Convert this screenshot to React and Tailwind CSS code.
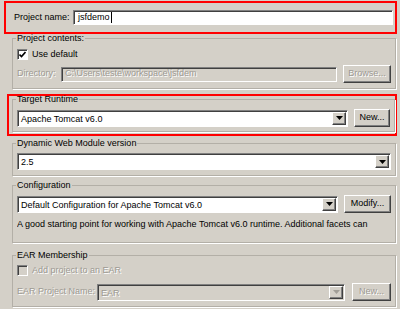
import clsx from "clsx";

const sunken =
  "border border-t-[#808080] border-l-[#808080] border-b-white border-r-white shadow-[inset_1px_1px_0_#404040]";
const raised =
  "border border-t-white border-l-white border-r-[#404040] border-b-[#404040] shadow-[inset_-1px_-1px_0_#808080]";
const dim = "text-[#9d9a93] [text-shadow:1px_1px_0_#fff]";

function Group({ label, className, children }) {
  return (
    <fieldset
      className={clsx(
        "border border-[#b3afa7] px-[4px] shadow-[1px_1px_0_#fff]",
        className
      )}
    >
      <legend className="-ml-[1px] px-[1px] leading-[7px]">{label}</legend>
      {children}
    </fieldset>
  );
}

function Button({ children, disabled, className }) {
  return (
    <div
      className={clsx(
        "flex h-[18px] shrink-0 items-center justify-center bg-[#d4d0c8]",
        raised,
        disabled ? dim : "text-black",
        className
      )}
    >
      {children}
    </div>
  );
}

function Arrow({ disabled }) {
  return (
    <div
      className={clsx(
        "my-[1px] mr-[1px] flex w-[14px] items-center justify-center bg-[#d4d0c8]",
        raised
      )}
    >
      <svg width="7" height="4" viewBox="0 0 7 4">
        <path d="M0 0h7L3.5 4z" fill={disabled ? "#a19e97" : "#000"} />
      </svg>
    </div>
  );
}

function Combo({ value, disabled, className }) {
  return (
    <div
      className={clsx(
        "flex h-[17px] items-stretch",
        sunken,
        disabled ? "bg-[#d4d0c8]" : "bg-white",
        className
      )}
    >
      <span
        className={clsx(
          "flex-1 overflow-hidden whitespace-nowrap pl-[3px] pt-[1px] leading-[14px]",
          disabled && dim
        )}
      >
        {value}
      </span>
      <Arrow disabled={disabled} />
    </div>
  );
}

function Checkbox({ checked, disabled }) {
  return (
    <div
      className={clsx(
        "flex h-[11px] w-[11px] shrink-0 items-center justify-center",
        sunken,
        disabled ? "bg-[#d4d0c8]" : "bg-white"
      )}
    >
      {checked && (
        <svg width="7" height="7" viewBox="0 0 7 7">
          <path d="M0.5 3.5 L2.5 5.5 L6.5 1" stroke="#000" strokeWidth="1.6" fill="none" />
        </svg>
      )}
    </div>
  );
}

export default function App() {
  return (
    <div className="h-[309px] w-[400px] overflow-hidden bg-[#d4d0c8] pt-[1px] font-['Liberation_Sans',Arial,sans-serif] text-[9px] text-black">
      <div className="ml-[4px] flex h-[33px] w-[393px] items-center border-2 border-[#f00] pl-[8px]">
        <span className="w-[59px] shrink-0">Project name:</span>
        <div className={clsx("flex h-[15px] w-[320px] items-center bg-white pl-[4px]", sunken)}>
          <span>jsfdemo</span>
          <span className="ml-[1px] h-[11px] w-px bg-black" />
        </div>
      </div>

      <Group label="Project contents:" className="ml-[12px] mt-[1px] w-[384px] pt-[7px] pb-[5px]">
        <div className="flex h-[11px] items-center gap-[4px]">
          <Checkbox checked />
          <span>Use default</span>
        </div>
        <div className="mt-[5px] flex h-[18px] items-center">
          <span className={clsx("w-[44px] shrink-0", dim)}>Directory:</span>
          <div
            className={clsx(
              "flex h-[15px] flex-1 items-center overflow-hidden whitespace-nowrap bg-[#d4d0c8] pl-[3px]",
              sunken,
              dim
            )}
          >
            C:\Users\teste\workspace\jsfdem
          </div>
          <Button disabled className="ml-[6px] w-[48px]">
            Browse...
          </Button>
        </div>
      </Group>

      <div className="ml-[7px] mt-[5px] h-[42px] w-[390px] border-2 border-[#f00] pl-[3px]">
        <Group label="Target Runtime" className="w-[383px] pt-[6px] pb-[4px]">
          <div className="flex h-[18px] items-center">
            <Combo value="Apache Tomcat v6.0" className="flex-1" />
            <Button className="ml-[6px] w-[36px]">New...</Button>
          </div>
        </Group>
      </div>

      <Group label="Dynamic Web Module version" className="ml-[12px] mt-[4px] w-[384px] pt-[6px] pb-[5px]">
        <Combo value="2.5" />
      </Group>

      <Group label="Configuration" className="ml-[12px] mt-[6px] w-[384px] pt-[6px] pb-[12px]">
        <div className="flex h-[18px] items-center">
          <Combo value="Default Configuration for Apache Tomcat v6.0" className="flex-1" />
          <Button className="ml-[6px] w-[47px]">Modify...</Button>
        </div>
        <p className="mt-[6px] overflow-hidden whitespace-nowrap leading-[11px]">
          A good starting point for working with Apache Tomcat v6.0 runtime. Additional facets can
        </p>
      </Group>

      <Group label="EAR Membership" className="ml-[12px] mt-[9px] w-[384px] pt-[6px] pb-[5px]">
        <div className="flex h-[11px] items-center gap-[4px]">
          <Checkbox disabled />
          <span className={dim}>Add project to an EAR</span>
        </div>
        <div className="mt-[7px] flex h-[18px] items-center">
          <span className={clsx("w-[80px] shrink-0", dim)}>EAR Project Name:</span>
          <Combo value="EAR" disabled className="flex-1" />
          <Button disabled className="ml-[7px] w-[39px]">
            New...
          </Button>
        </div>
      </Group>
    </div>
  );
}
